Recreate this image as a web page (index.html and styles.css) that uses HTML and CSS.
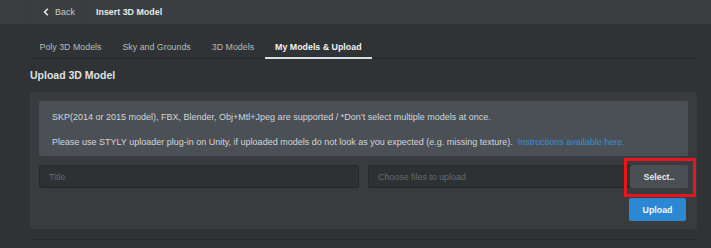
FILE: index.html
```html
<!DOCTYPE html>
<html>
<head>
<meta charset="utf-8">
<link rel="stylesheet" href="styles.css">
</head>
<body>
<header class="topbar">
  <a class="back"><svg class="chev" width="6" height="8" viewBox="0 0 6 8"><path d="M4.8 0.8 L1.6 4 L4.8 7.2" fill="none" stroke="#e4e6e8" stroke-width="1.6"/></svg>Back</a>
  <span class="title">Insert 3D Model</span>
</header>
<nav class="tabs">
  <span class="tab">Poly 3D Models</span>
  <span class="tab">Sky and Grounds</span>
  <span class="tab">3D Models</span>
  <span class="tab active">My Models &amp; Upload</span>
</nav>
<main class="content">
  <h2 class="heading">Upload 3D Model</h2>
  <section class="panel">
    <div class="info">
      <p>SKP(2014 or 2015 model), FBX, Blender, Obj+Mtl+Jpeg are supported / *Don’t select multiple models at once.</p>
      <p>Please use STYLY uploader plug-in on Unity, if uploaded models do not look as you expected (e.g. missing texture).&nbsp; <a class="link">Instructions available here.</a></p>
    </div>
    <div class="fields">
      <div class="input"><span class="ph">Title</span></div>
      <div class="input file"><span class="ph">Choose files to upload</span><span class="select">Select..<span class="mark"></span></span></div>
    </div>
    <div class="actions"><span class="upload">Upload</span></div>
  </section>
  <div class="rule"></div>
</main>
</body>
</html>
```
FILE: styles.css
```css
* { box-sizing: border-box; }
body {
  margin: 0;
  background: #2f3336;
  font-family: "Liberation Sans", Arial, sans-serif;
  color: #d8dadc;
  width: 711px;
  height: 248px;
  overflow: hidden;
}
.topbar {
  height: 25px;
  background: #3a3e41;
  border-bottom: 1px solid #2c2f32;
  display: flex;
  align-items: center;
  padding-left: 29px;
}
.back {
  display: flex;
  align-items: center;
  height: 24px;
  padding: 0 10px 0 13px;
  border-left: 1px solid #363a3d;
  border-right: 1px solid #363a3d;
  font-size: 9px;
  color: #c9cccf;
}
.chev { margin-right: 6px; }
.title {
  margin-left: 10px;
  font-size: 8.9px;
  font-weight: bold;
  color: #e6e8ea;
}
.tabs {
  display: flex;
  margin: 0 14px 0 29px;
  height: 34px;
  border-bottom: 2px solid #2a2d30;
}
.tab {
  display: flex;
  align-items: center;
  padding: 12px 10.5px 0;
  font-size: 8.85px;
  color: #b7babd;
  margin-bottom: -2px;
  border-bottom: 2px solid transparent;
}
.tab.active {
  color: #f2f2f2;
  font-weight: bold;
  border-bottom-color: #dcdcdc;
}
.content { margin: 0 14px 0 30px; }
.heading {
  margin: 0;
  padding-top: 10px;
  height: 33px;
  font-size: 10.5px;
  font-weight: bold;
  color: #dfe1e3;
}
.panel {
  background: #383c3f;
  padding: 9px 9px 8px;
  border-radius: 2px;
}
.info {
  background: #4a5056;
  border-radius: 2px;
  padding: 10px 13px 8px;
  font-size: 9px;
  color: #d3d6d8;
}
.info p { margin: 0; line-height: 12px; }
.info p + p { margin-top: 13px; }
.link { color: #3b8fd3; }
.fields {
  display: grid;
  grid-template-columns: 1fr 1fr;
  gap: 9px;
  margin-top: 9px;
}
.input {
  height: 23px;
  background: #2e3134;
  border: 1px solid #25282a;
  border-radius: 2px;
  display: flex;
  align-items: center;
  padding-left: 9px;
  font-size: 8.9px;
  color: #676b6e;
}
.input.file { padding-right: 0; }
.ph { flex: 1; }
.select {
  position: relative;
  width: 58px;
  height: 23px;
  margin: -1px -1px -1px 0;
  background: #4a4f54;
  border-radius: 2px;
  display: flex;
  align-items: center;
  justify-content: center;
  font-size: 8.8px;
  font-weight: bold;
  color: #e8e9ea;
}
.mark {
  position: absolute;
  left: -6px;
  top: -7px;
  right: -8px;
  bottom: -9px;
  border: 3px solid #ea141d;
}
.actions {
  display: flex;
  justify-content: flex-end;
  margin-top: 10px;
  padding-right: 2px;
}
.upload {
  width: 57px;
  height: 23px;
  background: #2d88d4;
  border-radius: 2px;
  display: flex;
  align-items: center;
  justify-content: center;
  font-size: 8.8px;
  font-weight: bold;
  color: #f4f7fa;
}
.rule {
  margin: 10px 0 0 -1px;
  border-top: 1px solid #26292b;
}
```
